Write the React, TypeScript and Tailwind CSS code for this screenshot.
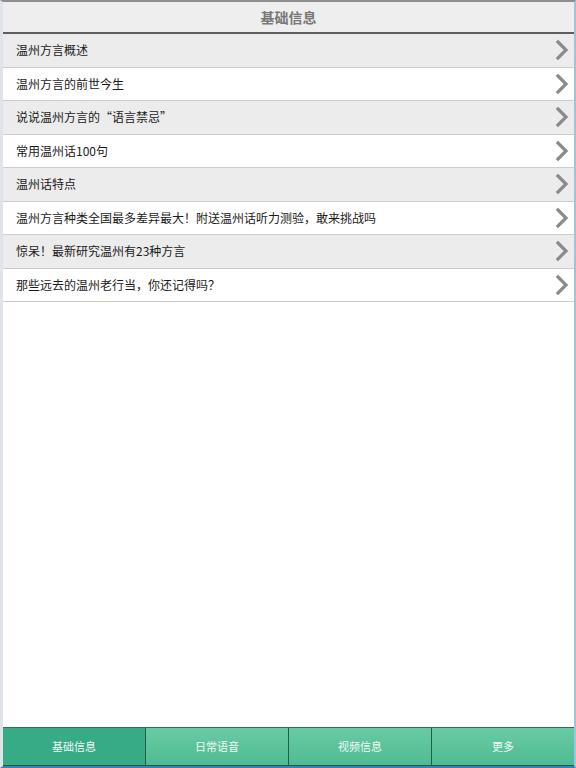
import { useState } from 'react';

const items = [
    '温州方言概述',
    '温州方言的前世今生',
    '说说温州方言的“语言禁忌”',
    '常用温州话100句',
    '温州话特点',
    '温州方言种类全国最多差异最大！附送温州话听力测验，敢来挑战吗',
    '惊呆！最新研究温州有23种方言',
    '那些远去的温州老行当，你还记得吗？',
];

const tabs = ['基础信息', '日常语音', '视频信息', '更多'];

const Chevron = () => (
    <svg width="14" height="22" viewBox="0 0 14 22" className="shrink-0">
        <path d="M3 3 L11 11 L3 19" fill="none" stroke="#8a8a8a" strokeWidth="3.2" strokeLinecap="square" strokeLinejoin="miter" />
    </svg>
);

const App = () => {
    const [active, setActive] = useState(0);

    return (
        <div
            className="h-[768px] w-[576px] flex flex-col bg-white border-l-[3px] border-l-[#dfe4e8] border-r-2 border-r-[#9fc4df] border-t-2 border-t-[#8e8e8e] border-b-2 border-b-[#3f7fb8] overflow-hidden"
            style={{ fontFamily: '"Noto Sans CJK SC", "Noto Sans", sans-serif' }}
        >
            <div className="h-[32px] shrink-0 flex items-center justify-center bg-[#eeeeee] border-b-2 border-b-[#5e5e5e] text-[14px] font-bold text-[#777]">
                基础信息
            </div>
            <ul className="flex-1">
                {items.map((t, i) => (
                    <li
                        key={t}
                        className={`h-[33.5px] flex items-center justify-between pl-[13px] pr-[5px] border-b border-b-[#cdcdcd] text-[12px] text-[#1a1a1a] cursor-pointer ${
                            i % 2 === 0 ? 'bg-[#ececec]' : 'bg-white'
                        }`}
                    >
                        <span>{t}</span>
                        <Chevron />
                    </li>
                ))}
            </ul>
            <div className="h-[39px] shrink-0 flex border-t border-t-[#2f6f5c] border-b border-b-[#24584a]">
                {tabs.map((t, i) => (
                    <button
                        key={t}
                        onClick={() => setActive(i)}
                        className={`flex-1 flex items-center justify-center text-[11px] text-[#eefaf5] ${
                            i > 0 ? 'border-l border-l-[#1f5e4b]' : ''
                        } ${
                            active === i
                                ? 'bg-[#37aa86]'
                                : 'bg-gradient-to-b from-[#68cba3] to-[#4fbb92]'
                        }`}
                    >
                        {t}
                    </button>
                ))}
            </div>
        </div>
    );
};

export default App;
